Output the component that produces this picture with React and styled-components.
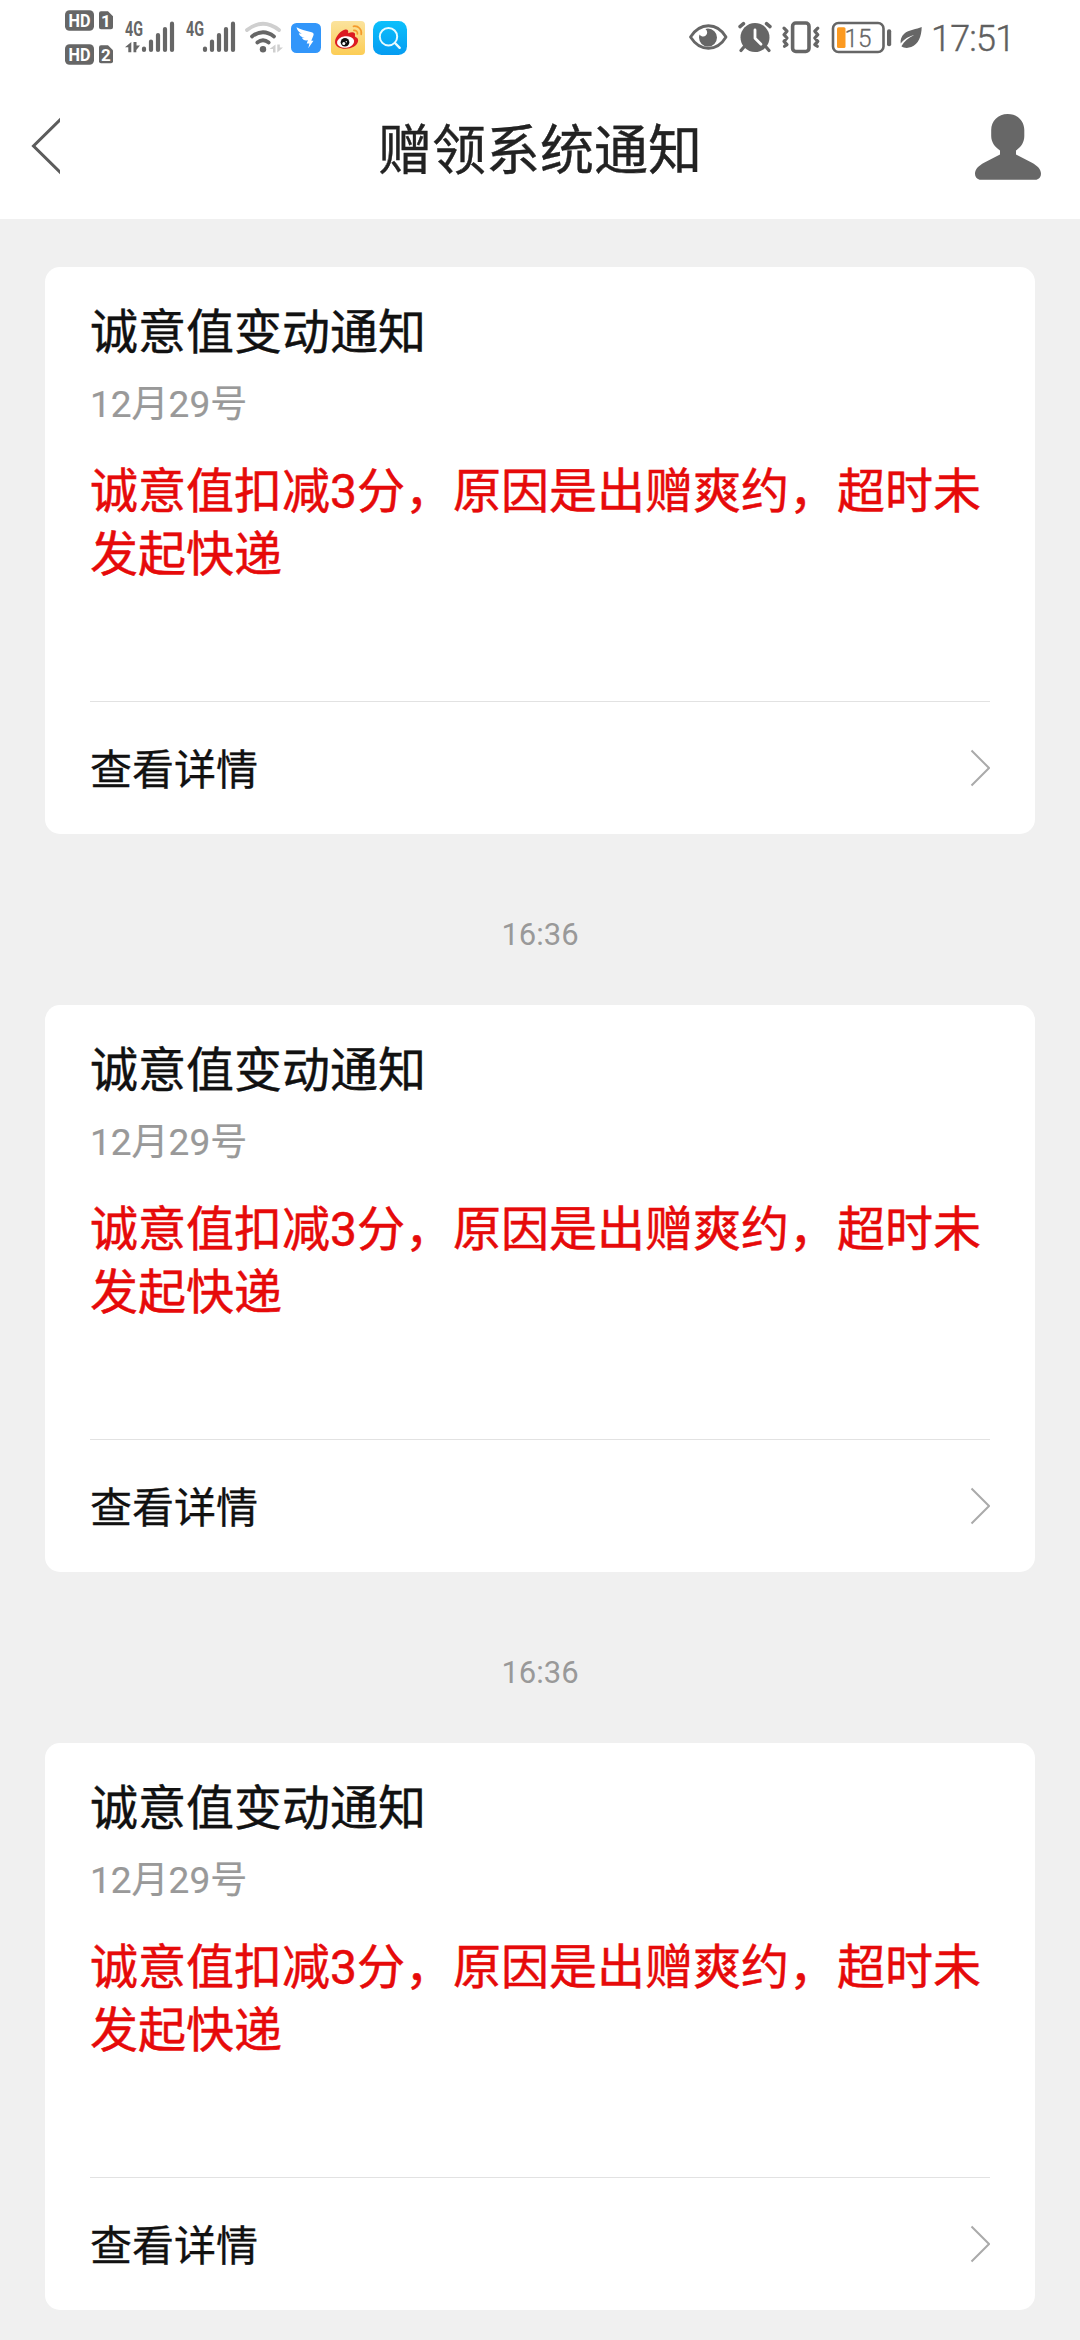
import React from 'react';
import styled, { createGlobalStyle } from 'styled-components';

const GlobalStyle = createGlobalStyle`
  * { box-sizing: border-box; }
  html, body { margin: 0; padding: 0; background: #f0f0f0; }
  body { font-family: Roboto, "Noto Sans CJK SC", sans-serif; overflow: hidden; }
  h1, h2, p { margin: 0; font-weight: 400; }
  svg { display: block; flex: none; }
`;

const INK = '#666666';

const Screen = styled.div`
  width: 1080px;
  height: 2340px;
  display: flex;
  flex-direction: column;
  overflow: hidden;
  background: #f0f0f0;
`;

const StatusBar = styled.div`
  height: 76px;
  flex: none;
  display: flex;
  justify-content: space-between;
  padding: 0 65px 0 60px;
  background: #fff;
`;

const StatusGroup = styled.div`
  display: flex;
`;

const Clock = styled.span`
  width: 89px;
  padding-left: 5px;
  font-size: 36px;
  line-height: 78px;
  font-weight: 300;
  letter-spacing: -0.8px;
  color: #5f5f5f;
  -webkit-text-stroke: 0.4px #5f5f5f;
  white-space: nowrap;
`;

const NavBar = styled.header`
  height: 143px;
  flex: none;
  display: grid;
  grid-template-columns: 110px 1fr 110px;
  background: #fff;
`;

const NavTitle = styled.h1`
  padding-top: 4px;
  font-size: 54px;
  line-height: 143px;
  height: 143px;
  text-align: center;
  color: #222;
  -webkit-text-stroke: 0.4px #222;
`;

const NavButton = styled.button`
  border: 0;
  padding: 0;
  background: none;
  display: flex;
`;

const Feed = styled.main`
  display: flex;
  flex-direction: column;
  padding: 48px 45px 0;
`;

const Card = styled.article`
  height: 567px;
  flex: none;
  display: flex;
  flex-direction: column;
  padding: 33px 45px 0;
  border-radius: 15px;
  background: #fff;
`;

const CardTitle = styled.h2`
  font-size: 48px;
  line-height: 66px;
  color: #111;
  -webkit-text-stroke: 0.4px #111;
`;

const CardDate = styled.p`
  margin-top: 14px;
  font-size: 37px;
  line-height: 50px;
  color: #999;
  -webkit-text-stroke: 0.2px #999;
`;

const CardMessage = styled.p`
  flex: 1;
  margin-top: 30px;
  font-size: 48px;
  line-height: 63px;
  color: #e60a0a;
  -webkit-text-stroke: 0.5px #e60a0a;
`;

const CardLink = styled.div`
  height: 133px;
  display: flex;
  align-items: center;
  justify-content: space-between;
  border-top: 1px solid #e2e2e2;
`;

const LinkLabel = styled.span`
  padding-top: 5px;
  font-size: 42px;
  line-height: 60px;
  color: #111;
  -webkit-text-stroke: 0.3px #111;
`;

const TimeLabel = styled.time`
  height: 171px;
  flex: none;
  padding-top: 71px;
  font-size: 31px;
  line-height: 60px;
  text-align: center;
  color: #999;
`;

// Status glyphs share the bar's coordinate space; each one shows its own slice of it.
const Glyph = ({ from, to, children }) => (
  <svg width={to - from} height="76" viewBox={`${from} 0 ${to - from} 76`} fill="none">
    {children}
  </svg>
);

const HdBadge = ({ y, n }) => (
  <g>
    <rect x="65" y={y} width="29" height="20.5" rx="4.5" fill={INK} />
    <text x="79.5" y={y + 16.6} textAnchor="middle" textLength="22" lengthAdjust="spacingAndGlyphs" fontFamily="Roboto, sans-serif" fontWeight="700" fontSize="18" fill="#fff">HD</text>
    <path d={`M101 ${y + 1}h7l5 5v11q0 2-2 2h-10q-2 0-2-2v-14q0-2 2-2z`} fill={INK} />
    <text x="106" y={y + 16.2} textAnchor="middle" fontFamily="Roboto, sans-serif" fontWeight="700" fontSize="17" fill="#fff">{n}</text>
  </g>
);

const Signal = ({ x }) => (
  <g stroke={INK} strokeWidth="4.2" strokeLinecap="round">
    <path d={`M${x} 48.5v1.4M${x + 7} 41.5v8.4M${x + 14} 35v14.9M${x + 21} 29v20.9M${x + 28} 23.7v26.2`} />
    <text x={x - 19} y="36" textLength="18" lengthAdjust="spacingAndGlyphs" stroke="none" fontFamily="Roboto, sans-serif" fontWeight="700" fontSize="19.5" fill={INK}>4G</text>
  </g>
);

const LeftStatus = () => (
  <StatusGroup>
    <Glyph from={60} to={120}>
      <HdBadge y={10.3} n="1" />
      <HdBadge y={44.3} n="2" />
    </Glyph>
    <Glyph from={120} to={180}>
      <Signal x={144} />
      <path d="M131.300 42v10.300h-3v-5H125zM133.500 42v10.300h2.800v-2.200l3.700-4.600h-3.500V42z" fill={INK} />
    </Glyph>
    <Glyph from={180} to={240}>
      <Signal x={205} />
    </Glyph>
    <Glyph from={240} to={286}>
      <g strokeWidth="3.8" strokeLinecap="round">
        <path d="M247 30Q263 17.5 279 30" stroke="#cfcfcf" />
        <path d="M252 36.4Q263 28 274 36.4" stroke={INK} />
        <path d="M257.3 42.6Q263 38 268.7 42.6" stroke={INK} />
      </g>
      <circle cx="263" cy="49.3" r="3.2" fill={INK} />
      <path d="M275.500 44.500v8h-2.500v-3.500H269.500zM277.300 44.500v8l5.700-5h-3.200V44.500z" fill="#cfcfcf" />
    </Glyph>
    <Glyph from={286} to={326}>
      <rect x="291" y="23" width="30" height="30" rx="5.5" fill="#3296fa" />
      <path d="M296.5 27.3c4 2.3 9 3.4 14.2 4.8 2.6.7 3.5 1.6 2.7 3.4l-2.1 5.2h2.2l-5.2 7.5 1.1-4.7h-2.7l1.2-3.2c-3.3.5-5.2-.6-6-2.5l2.7.1c-3.2-.8-5-2.1-5.8-4.6l3 .5c-3-1.5-4.700-3.600-5.300-6.500z" fill="#fff" />
    </Glyph>
    <Glyph from={326} to={369}>
      <defs>
        <linearGradient id="gold" x1="0" y1="0" x2="0" y2="1">
          <stop offset="0" stopColor="#fbe39d" />
          <stop offset="1" stopColor="#fccd55" />
        </linearGradient>
        <linearGradient id="sky" x1="0" y1="0" x2="0" y2="1">
          <stop offset="0" stopColor="#0cc0fc" />
          <stop offset="1" stopColor="#069cf1" />
        </linearGradient>
      </defs>
      <rect x="331" y="21" width="34" height="34" rx="4" fill="url(#gold)" />
      <path d="M335 42c0-5 6-12 10.500-12.500 2.400-.2 3.200 1.500 2.600 3.700 3.300-1.500 7.800-1.700 6.900 2.100-.2 1-.2 1.300.5 1.600 2.300.8 3 2.500 2.500 4.700-1 4.500-6.500 7.200-12.500 7.200S335 46.200 335 42z" fill="#dc1b22" />
      <ellipse cx="345.600" cy="42" rx="8.600" ry="5.700" transform="rotate(-8 345.600 42)" fill="#fff" />
      <circle cx="345" cy="42.200" r="4.300" fill="#111" />
      <circle cx="343.800" cy="43.500" r="1.500" fill="#fff" />
      <circle cx="346.300" cy="41.700" r=".7" fill="#fff" />
      <path d="M353.500 26.300c5-.7 8.600 3.200 7.700 8M353.800 30.300c2.500-.1 3.900 1.400 3.600 3.700" stroke="#f49a2c" strokeWidth="1.700" strokeLinecap="round" />
    </Glyph>
    <Glyph from={369} to={412}>
      <rect x="373" y="21" width="34" height="34" rx="8.500" fill="url(#sky)" />
      <circle cx="388.500" cy="36.700" r="8.700" stroke="#e8fbff" strokeWidth="2" />
      <path d="M395 43l4.700 4.800" stroke="#e8fbff" strokeWidth="2.400" strokeLinecap="round" />
    </Glyph>
  </StatusGroup>
);

const RightStatus = () => (
  <StatusGroup>
    <Glyph from={684} to={733}>
      <path d="M690.500 37C700 22 717 22 726 37 717 52 700 52 690.500 37z" stroke={INK} strokeWidth="2.800" strokeLinejoin="round" />
      <path d="M708 28.600a9 9 0 1 1-9 9q0-1.800.6-3.200c1.600 2.300 4.500 2.600 6.200 1 2-1.800 1.800-4.600-.3-6.400q1.200-.4 2.500-.4z" fill={INK} />
    </Glyph>
    <Glyph from={733} to={777}>
      <circle cx="755" cy="37.500" r="14.500" fill={INK} />
      <path d="M743.500 47.500l-2.500 3M766.500 47.500l2.500 3" stroke={INK} strokeWidth="3.200" strokeLinecap="round" />
      <path d="M740 26.600l3.500-3M770 26.600l-3.500-3" stroke={INK} strokeWidth="3.400" strokeLinecap="round" />
      <path d="M755 30v8.300l6 6" stroke="#fff" strokeWidth="2.800" strokeLinecap="round" strokeLinejoin="round" />
    </Glyph>
    <Glyph from={777} to={827}>
      <rect x="792.600" y="23" width="16.400" height="28.500" rx="3.200" stroke={INK} strokeWidth="3.600" />
      <path d="M784 28.200l3 3-3 3.500 3 3.300-3 3.300 3 3.300-2.500 1.700M817.800 28.200l-3 3 3 3.500-3 3.300 3 3.300-3 3.300 2.500 1.700" stroke={INK} strokeWidth="3.200" strokeLinecap="round" strokeLinejoin="round" />
    </Glyph>
    <Glyph from={827} to={896}>
      <rect x="833" y="23" width="50.500" height="29" rx="5.500" stroke={INK} strokeWidth="2.600" />
      <rect x="837" y="27.300" width="8.500" height="20.700" rx="1.500" fill="#fc9a21" />
      <text x="844.500" y="46.700" textLength="27" lengthAdjust="spacingAndGlyphs" fontFamily="Roboto, sans-serif" fontWeight="300" fontSize="26.500" fill={INK} stroke={INK} strokeWidth=".3">15</text>
      <rect x="887" y="29.200" width="4.200" height="17" rx="2" fill={INK} />
    </Glyph>
    <Glyph from={896} to={926}>
      <path d="M921.700 27c-5 2.500-13 2.500-17.500 6.800-2.800 2.700-4 5.800-3.500 9.600 4-5 8.500-7 13.500-8.400-5.700 2.700-10 6-12.800 11.300 2.400 1.700 6 2.200 9.800.8C918.500 44.300 921.500 36.500 921.700 27z" fill={INK} />
    </Glyph>
    <Clock>17:51</Clock>
  </StatusGroup>
);

const BackIcon = () => (
  <svg width="60" height="143" viewBox="0 76 60 143" fill="none">
    <path d="M62 118L33.500 146 62 174" stroke="#5c5c5c" strokeWidth="3" />
  </svg>
);

const PersonIcon = () => (
  <svg width="110" height="143" viewBox="970 76 110 143">
    <path d="M1007.700 114c9.800 0 16.600 7 16.600 16v6c0 6-3 11-8.300 14.500v4l15.500 8c6.500 3.500 9.500 7 9.500 11.200 0 2.800-1.500 5-4.500 6.100h-57c-3-1.100-4.500-3.300-4.500-6.100 0-4.200 3-7.700 9.500-11.200l15.500-8v-4c-5.300-3.500-8.800-8.500-8.800-14.500v-6c0-9 6.800-16 16.500-16z" fill="#676767" />
  </svg>
);

const ChevronIcon = () => (
  <svg width="20" height="38" viewBox="0 0 20 38" fill="none">
    <path d="M1.500 1.500L19 19 1.500 36.500" stroke="#aaa" strokeWidth="2" />
  </svg>
);

const notices = [
  { id: 1 },
  { id: 2, time: '16:36' },
  { id: 3, time: '16:36' },
];

const Notice = () => (
  <Card>
    <CardTitle>诚意值变动通知</CardTitle>
    <CardDate>12月29号</CardDate>
    <CardMessage>诚意值扣减3分，原因是出赠爽约，超时未发起快递</CardMessage>
    <CardLink>
      <LinkLabel>查看详情</LinkLabel>
      <ChevronIcon />
    </CardLink>
  </Card>
);

export default function App() {
  return (
    <Screen>
      <GlobalStyle />
      <StatusBar>
        <LeftStatus />
        <RightStatus />
      </StatusBar>
      <NavBar>
        <NavButton aria-label="返回"><BackIcon /></NavButton>
        <NavTitle>赠领系统通知</NavTitle>
        <NavButton aria-label="我的"><PersonIcon /></NavButton>
      </NavBar>
      <Feed>
        {notices.map(({ id, time }) => (
          <React.Fragment key={id}>
            {time && <TimeLabel>{time}</TimeLabel>}
            <Notice />
          </React.Fragment>
        ))}
      </Feed>
    </Screen>
  );
}
